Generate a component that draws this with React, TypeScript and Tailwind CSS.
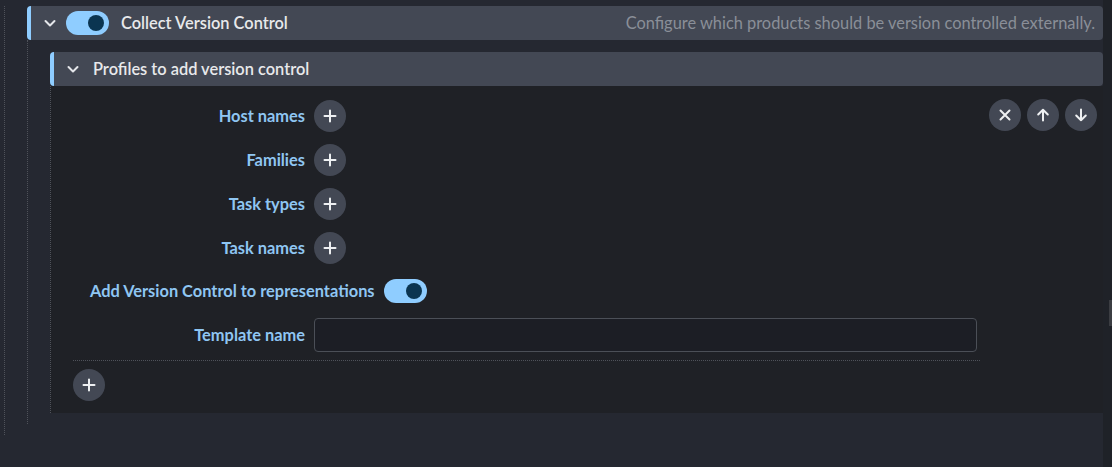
import { FC, PropsWithChildren } from "react";

const font = { fontFamily: "Lato, 'Noto Sans', sans-serif" };

const Chevron: FC = () => (
    <svg width="14" height="14" viewBox="0 0 14 14" fill="none" className="flex-shrink-0">
        <path d="M2.5 5l4.5 4.5L11.5 5" stroke="#e4e6ea" strokeWidth="2" strokeLinecap="round" strokeLinejoin="round" />
    </svg>
);

const Toggle: FC = () => (
    <div className="w-[43px] h-[24px] rounded-full bg-[#8fcdff] flex items-center justify-end pr-[5px] flex-shrink-0">
        <div className="w-[16px] h-[16px] rounded-full bg-[#0b3551]" />
    </div>
);

const RoundButton: FC<PropsWithChildren> = ({ children }) => (
    <div className="w-[32px] h-[32px] rounded-full bg-[#434854] flex items-center justify-center flex-shrink-0">
        <svg width="14" height="14" viewBox="0 0 14 14" fill="none" stroke="#eef0f2" strokeWidth="2" strokeLinecap="round" strokeLinejoin="round">
            {children}
        </svg>
    </div>
);

const Plus = () => <RoundButton><path d="M7 1.5v11M1.5 7h11" /></RoundButton>;

const Row: FC<{ label: string }> = ({ label }) => (
    <div className="flex items-center gap-[9px] h-[32px]">
        <span className="w-[232px] text-right text-[16.4px] font-bold text-[#8fc6f2]">{label}</span>
        <Plus />
    </div>
);

export default function App() {
    return (
        <div className="w-[1112px] h-[467px] bg-[#252831] flex overflow-hidden" style={font}>
            <div className="flex-1 pt-[6px] pl-[4px]">
                <div className="border-l border-dotted border-[#4f525a] pl-[22px] pb-[11px]">
                    <div className="h-[34px] rounded-[4px] bg-[#434854] border-l-4 border-[#8fcdff] flex items-center pl-[12px] pr-[8px]">
                        <Chevron />
                        <div className="ml-[9px]"><Toggle /></div>
                        <span className="ml-[12px] text-[16.4px] font-semibold text-[#e8e9eb]">Collect Version Control</span>
                        <span className="ml-auto text-[16.4px] text-[#8a8f98]">Configure which products should be version controlled externally.</span>
                    </div>
                    <div className="border-l border-dotted border-[#4f525a] pl-[22px] pt-[12px] pb-[11px]">
                        <div className="h-[34px] rounded-[4px] bg-[#434854] border-l-4 border-[#8fcdff] flex items-center pl-[12px]">
                            <Chevron />
                            <span className="ml-[13px] text-[16.4px] font-semibold text-[#e8e9eb]">Profiles to add version control</span>
                        </div>
                        <div className="border-l border-dotted border-[#4f525a] bg-[#1f2126] pl-[22px] pr-[5px] pt-[14px] pb-[12px]">
                            <div className="flex items-start gap-[9px]">
                                <div className="w-[907px] border-b border-dotted border-[#4f525a] pb-[8px] flex flex-col gap-[12px]">
                                    <Row label="Host names" />
                                    <Row label="Families" />
                                    <Row label="Task types" />
                                    <Row label="Task names" />
                                    <div className="flex items-center gap-[9px] h-[30px] pl-[17px]">
                                        <span className="text-[16.4px] font-bold text-[#8fc6f2]">Add Version Control to representations</span>
                                        <Toggle />
                                    </div>
                                    <div className="flex items-center gap-[9px] h-[34px]">
                                        <span className="w-[232px] text-right text-[16.4px] font-bold text-[#8fc6f2]">Template name</span>
                                        <div className="w-[663px] h-[34px] rounded-[4px] border border-[#4b4f57] bg-[#1c1e25]" />
                                    </div>
                                </div>
                                <div className="flex gap-[6px] -mt-[1px]">
                                    <RoundButton><path d="M2.5 2.5l9 9M11.5 2.5l-9 9" /></RoundButton>
                                    <RoundButton><path d="M7 12.5V1.8M2.2 6.5L7 1.7l4.8 4.8" /></RoundButton>
                                    <RoundButton><path d="M7 1.5v10.7M2.2 7.5L7 12.3l4.8-4.8" /></RoundButton>
                                </div>
                            </div>
                            <div className="mt-[8px]">
                                <Plus />
                            </div>
                        </div>
                    </div>
                </div>
            </div>
            <div className="w-[9px] bg-[#1f2228] flex flex-col pt-[300px]">
                <div className="ml-auto w-[3px] h-[26px] bg-[#3b3d42]" />
            </div>
        </div>
    );
}
